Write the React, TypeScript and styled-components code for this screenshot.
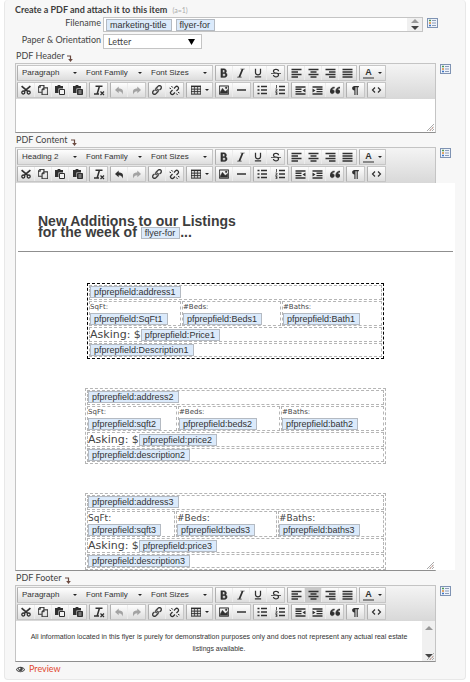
import React from "react";
import styled, { createGlobalStyle, css } from "styled-components";
import {
  ImCopy, ImLink, ImTable2, ImImage,
  ImBold, ImItalic, ImUnderline, ImStrikethrough, ImQuotesLeft, ImPilcrow, ImEye,
} from "react-icons/im";

const Global = createGlobalStyle`
  *, *::before, *::after { box-sizing: border-box; }
  body { margin: 0; background: #fff; color: #444; font: 9px/14px Lato, sans-serif; }
  button, select { font: inherit; color: inherit; margin: 0; }
`;

const ui = `"Liberation Sans", Arial, sans-serif`;

const Panel = styled.main`
  margin: 0 4px;
  padding: 3px 14px 0 10px;
  background: #f7f7f7;
  border: 1px solid #e8e8e8;
  border-top: 0;
  border-radius: 4px;
`;
const Title = styled.h1`
  margin: 0;
  height: 14px;
  font-size: 9px;
  line-height: 14px;
  font-weight: 700;
  color: #3c3c3c;
`;
const Note = styled.small`
  margin-left: 3px;
  font-size: 7px;
  font-weight: 400;
  color: #aaa;
`;
const FieldRow = styled.div`
  display: flex;
  height: 15px;
  margin-bottom: 2px;
  padding-right: 13px;
  & + & { margin-bottom: 0; }
`;
const FieldLabel = styled.label`
  width: 86px;
  margin-right: 2px;
  text-align: right;
  line-height: 12px;
  white-space: nowrap;
`;
const TagBox = styled.div`
  flex: 1;
  display: flex;
  background: #fff;
  border: 1px solid #c4c4c4;
`;
const Tags = styled.div`
  flex: 1;
  display: flex;
  align-items: flex-start;
  gap: 4px;
  padding: 1px 2px;
`;
const Chip = styled.span`
  display: inline-block;
  height: 12px;
  padding: 0 4px 0 3px;
  background: #dbeafb;
  border: 1px solid #b4bac2;
  color: #333;
  font: 400 9px/10px ${ui};
  white-space: nowrap;
  vertical-align: middle;
`;
const Scroller = styled.div<{ $tall?: boolean }>`
  width: ${(p) => (p.$tall ? 13 : 15)}px;
  display: flex;
  flex-direction: column;
  justify-content: space-between;
  background: #f0f0f0;
  padding: ${(p) => (p.$tall ? "4px 0 2px" : "0")};
`;
const ScrollButton = styled.button`
  display: flex;
  align-items: center;
  justify-content: center;
  height: 6px;
  padding: 0;
  border: 0;
  background: none;
`;
const ListButton = styled.button`
  display: block;
  flex: none;
  width: 11px;
  height: 10px;
  margin: 1px 0 0 4px;
  padding: 0;
  border: 0;
  background: none;
  svg { display: block; }
`;
const PaperWrap = styled.div`
  display: grid;
  align-items: center;
  width: 99px;
  background: #fff;
  border: 1px solid #c4c4c4;
  svg { grid-area: 1 / 1; justify-self: end; margin-right: 6px; pointer-events: none; }
`;
const PlainSelect = styled.select`
  grid-area: 1 / 1;
  appearance: none;
  width: 100%;
  height: 100%;
  padding: 0 4px;
  border: 0;
  background: none;
`;
const SectionTitle = styled.h2`
  display: flex;
  align-items: center;
  gap: 3px;
  margin: 0 0 0 1px;
  height: 14px;
  font-size: 9px;
  font-weight: 400;
  svg { margin-top: 5px; }
`;
const EditorRow = styled.div`
  display: flex;
`;
const EditorBox = styled.section`
  position: relative;
  flex: 1;
  min-width: 0;
  border: 1px solid #c4c4c4;
  border-bottom-color: #8f8f8f;
`;
const Toolbar = styled.div`
  display: flex;
  flex-direction: column;
  gap: 1px;
  padding: 1px;
  background: linear-gradient(#f4f4f4, #d8d8d8);
`;
const ToolRow = styled.div`
  display: flex;
  gap: 2px;
`;
const Group = styled.div`
  display: flex;
  height: 16px;
  border: 1px solid #c6c6c6;
  border-left-color: #b0b0b0;
  border-radius: 1px;
  background: linear-gradient(#fefefe, #dddddd);
`;
const Tool = styled.button<{ $wide?: boolean; $active?: boolean; $muted?: boolean }>`
  display: flex;
  align-items: center;
  justify-content: center;
  gap: 4px;
  width: ${(p) => (p.$wide ? 25 : 17)}px;
  padding: 0;
  border: 0;
  border-right: 1px solid #ececec;
  background: ${(p) => (p.$active ? "#c9c9c9" : "none")};
  color: ${(p) => (p.$muted ? "#a3a3a3" : "#303030")};
  &:last-child { border-right: 0; }
`;
const Picker = styled.div<{ $first?: boolean }>`
  display: grid;
  align-items: center;
  width: ${(p) => (p.$first ? 64 : 65)}px;
  font: 8px/14px ${ui};
  color: #333;
  svg { grid-area: 1 / 1; justify-self: end; margin-right: 5px; pointer-events: none; }
`;
const Letter = styled.span`
  font: 700 9px/9px ${ui};
  border-bottom: 2px solid #888;
  padding: 0 2px;
`;

const bodyHeights = { header: 33, content: 387, footer: 40 };
const Body = styled.div<{ $kind: keyof typeof bodyHeights }>`
  min-height: ${(p) => bodyHeights[p.$kind]}px;
  background: #fff;
  ${(p) => p.$kind === "content" && css`
    height: 387px;
    margin-right: -20px;
    padding: 33px 2px 0;
    overflow: hidden;
  `}
  ${(p) => p.$kind === "footer" && css`display: flex;`}
`;
const Grip = styled.svg`
  position: absolute;
  right: 1px;
  bottom: 1px;
`;
const Headline = styled.h2`
  margin: 0 20px 12px;
  font: 700 14px/11px ${ui};
  color: #3d3d3d;
`;
const Rule = styled.hr`
  height: 1px;
  margin: 0 0 31px;
  border: 0;
  background: #8f8f8f;
`;
const Listing = styled.table<{ $selected?: boolean }>`
  width: ${(p) => (p.$selected ? 297 : 301)}px;
  margin: 0 auto 29px;
  table-layout: fixed;
  border: 1px dashed ${(p) => (p.$selected ? "#000" : "#b5b5b5")};
  border-spacing: 1px;
  color: #444;
`;
const Cell = styled.td<{ $h: number; $size?: number }>`
  height: ${(p) => p.$h}px;
  padding: 0;
  border: 1px dashed #b5b5b5;
  font: ${(p) => p.$size || 7}px/12px "DejaVu Sans", sans-serif;
  vertical-align: top;
  white-space: nowrap;
`;
const Caption = styled.div<{ $tall?: boolean }>`
  line-height: ${(p) => (p.$tall ? 12 : 11)}px;
`;
const Stack = styled.div`
  display: flex;
  flex-direction: column;
  align-items: flex-start;
`;
const Line = styled.div`
  display: flex;
  align-items: flex-end;
  line-height: 13px;
`;
const Legal = styled.p`
  flex: 1;
  margin: 0;
  padding: 10px 12px 0;
  font: 7px/12px ${ui};
  text-align: center;
  color: #333;
`;
const Preview = styled.a`
  display: flex;
  align-items: center;
  gap: 4px;
  height: 17px;
  margin-left: 1px;
  padding-bottom: 3px;
  color: #e2492f;
  text-decoration: none;
  svg { color: #444; }
`;

const Caret = () => (
  <svg width="4" height="2" viewBox="0 0 4 2"><path d="M0 0h4L2 2z" fill="#222" /></svg>
);
const Triangle = ({ up, color, size = 8 }: { up?: boolean; color: string; size?: number }) => (
  <svg width={size} height={size / 2} viewBox="0 0 8 4"><path d={up ? "M0 4h8L4 0z" : "M0 0h8L4 4z"} fill={color} /></svg>
);
const DownHook = () => (
  <svg width="6" height="7" viewBox="0 0 6 7"><path d="M0 1h3.500v4" fill="none" stroke="#6b4a40" strokeWidth="1.200" /><path d="M1.200 4h4.600L3.500 7z" fill="#6b4a40" /></svg>
);

const FieldList = () => (
  <ListButton type="button" aria-label="Insert field">
    <svg width="11" height="10" viewBox="0 0 11 10">
      <rect x=".5" y=".5" width="10" height="9" fill="#eef3fb" stroke="#7f93b3" />
      <path d="M2 2.500h2" stroke="#4d9a4d" strokeWidth="1.500" />
      <path d="M2 5h2" stroke="#dd8a33" strokeWidth="1.500" />
      <path d="M2 7.500h2" stroke="#3e74c4" strokeWidth="1.500" />
      <path d="M5 2.500h4M5 5h4M5 7.500h4" stroke="#8d9db8" />
    </svg>
  </ListButton>
);

const Strokes = ({ d, w = 1.5 }: { d: string; w?: number }) => (
  <svg width="11" height="10" viewBox="0 0 11 10"><path d={d} fill="none" stroke="currentColor" strokeWidth={w} /></svg>
);
const alignIcons: Record<string, string> = {
  "Align left": "M.5 1.500h10M.5 4h6.500M.5 6.500h10M.5 9h6.500",
  "Align center": "M.5 1.500h10M2.500 4h6M.5 6.500h10M2.500 9h6",
  "Align right": "M.5 1.500h10M4 4h6.500M.5 6.500h10M4 9h6.500",
  Justify: "M.5 1.500h10M.5 4h10M.5 6.500h10M.5 9h10",
};
const Cut = () => (
  <svg width="10" height="10" viewBox="0 0 10 10" fill="none" stroke="currentColor">
    <path d="M.6 1.200L6.500 6.200M9.400 1.200L3.500 6.200" strokeWidth="1.700" />
    <circle cx="2.300" cy="7.500" r="1.500" strokeWidth="1.300" />
    <circle cx="7.700" cy="7.500" r="1.500" strokeWidth="1.300" />
  </svg>
);
const Paste = ({ text }: { text?: boolean }) => (
  <svg width="10" height="10" viewBox="0 0 10 10">
    <path d="M0 1h2.200L3 0h2l.8 1H8v2.500H3.500V8H0z" fill="currentColor" />
    <path d="M4.500 4.500h5v5h-5z" fill={text ? "currentColor" : "#f2f2f2"} stroke="currentColor" />
    {text && <path d="M5.500 6h3M5.500 8h3" stroke="#e8e8e8" strokeWidth=".8" />}
  </svg>
);
const Turn = ({ redo }: { redo?: boolean }) => (
  <svg width="9" height="9" viewBox="0 0 9 9">
    <path
      d={redo
        ? "M5.300 .5v2C1.500 2.500 0 4.500 1.600 8.500 2 6.200 3 5.200 5.300 5.200v2.100L9 3.900z"
        : "M3.700 .5v2c3.800 0 5.300 2 3.700 6C7 6.200 6 5.200 3.700 5.200v2.100L0 3.900z"}
      fill="currentColor"
    />
  </svg>
);
const ClearFormat = () => (
  <svg width="12" height="11" viewBox="0 0 12 11">
    <path d="M2.500 1.200h7M6.500 1L4.300 8.500M1 9h5" fill="none" stroke="currentColor" strokeWidth="1.500" />
    <path d="M7.500 6.500l3.500 3.500M11 6.500L7.500 10" stroke="currentColor" strokeWidth="1.200" />
  </svg>
);
const Unlink = () => (
  <svg width="11" height="11" viewBox="0 0 11 11" fill="none" stroke="currentColor" strokeWidth="1.300">
    <path d="M5 3.500l1.500-1.600a1.700 1.700 0 0 1 2.500 2.500L7.500 6M6 7.500L4.500 9A1.700 1.700 0 0 1 2 6.600L3.500 5" />
    <path d="M2.500 1l1 1.500M.5 3l1.500.7M8.500 10l-1-1.500M10.500 8L9 7.300" strokeWidth="1" />
  </svg>
);
const Bullets = ({ numbered }: { numbered?: boolean }) => (
  <svg width="10" height="10" viewBox="0 0 10 10" stroke="currentColor">
    <path d="M4 1.500h6M4 5h6M4 8.500h6" strokeWidth="1.400" />
    {numbered ? <path d="M1.500 0v3M.5 4h1.500v1L.5 6.200H2.500M.5 7.500H2v2.200H.5M.8 8.600H2" fill="none" strokeWidth=".8" />
      : <path d="M.5 1.500h2M.5 5h2M.5 8.500h2" strokeWidth="1.600" />}
  </svg>
);
const Indent = ({ out }: { out?: boolean }) => (
  <svg width="11" height="9" viewBox="0 0 11 9">
    <path d={out ? "M.5 1h10M.5 3.300h6M.5 5.600h6M.5 8h10" : "M.5 1h10M4.500 3.300h6M4.500 5.600h6M.5 8h10"} stroke="currentColor" strokeWidth="1.400" />
    <path d={out ? "M10.500 2.500v4L7.500 4.500z" : "M.5 2.500v4l3-2z"} fill="currentColor" />
  </svg>
);
const Code = () => <Strokes w={1.2} d="M4 2.500L1.500 5 4 7.500M7 2.500L9.500 5 7 7.500" />;

type ToolDef = { label: string; icon: React.ReactNode; wide?: boolean; muted?: boolean };
const topTools: ToolDef[][] = [
  [
    { label: "Bold", icon: <ImBold size={10} strokeWidth={0.6} /> },
    { label: "Italic", icon: <ImItalic size={10} /> },
    { label: "Underline", icon: <ImUnderline size={10} /> },
    { label: "Strikethrough", icon: <ImStrikethrough size={10} /> },
  ],
  Object.keys(alignIcons).map((label) => ({ label, icon: <Strokes d={alignIcons[label]} /> })),
  [{ label: "Text color", wide: true, icon: <><Letter>A</Letter><Caret /></> }],
];
const bottomTools = (canUndo?: boolean): ToolDef[][] => [
  [
    { label: "Cut", icon: <Cut /> },
    { label: "Copy", icon: <ImCopy size={10} strokeWidth={0.6} /> },
    { label: "Paste", icon: <Paste /> },
    { label: "Paste as text", icon: <Paste text /> },
  ],
  [{ label: "Clear formatting", icon: <ClearFormat /> }],
  [
    { label: "Undo", icon: <Turn />, muted: !canUndo },
    { label: "Redo", icon: <Turn redo />, muted: true },
  ],
  [
    { label: "Insert link", icon: <ImLink size={10} strokeWidth={0.6} /> },
    { label: "Remove link", icon: <Unlink /> },
  ],
  [{ label: "Table", wide: true, icon: <><ImTable2 size={10} strokeWidth={0.4} /><Caret /></> }],
  [
    { label: "Insert image", icon: <ImImage size={10} strokeWidth={0.6} /> },
    { label: "Horizontal line", icon: <Strokes d="M1 5h9" /> },
  ],
  [
    { label: "Bullet list", icon: <Bullets /> },
    { label: "Numbered list", icon: <Bullets numbered /> },
  ],
  [
    { label: "Decrease indent", icon: <Indent out /> },
    { label: "Increase indent", icon: <Indent /> },
    { label: "Blockquote", icon: <ImQuotesLeft size={10} strokeWidth={0.6} /> },
  ],
  [{ label: "Show blocks", icon: <ImPilcrow size={9} /> }],
  [{ label: "Source code", icon: <Code /> }],
];

const ToolGroups = ({ groups, active }: { groups: ToolDef[][]; active?: string }) => (
  <>
    {groups.map((tools) => (
      <Group key={tools[0].label}>
        {tools.map((t) => (
          <Tool key={t.label} type="button" aria-label={t.label} $wide={t.wide} $muted={t.muted} $active={t.label === active}>
            {t.icon}
          </Tool>
        ))}
      </Group>
    ))}
  </>
);

type EditorProps = {
  title: string;
  format: string;
  kind: keyof typeof bodyHeights;
  canUndo?: boolean;
  active?: string;
  children?: React.ReactNode;
};
const Editor = ({ title, format, kind, canUndo, active, children }: EditorProps) => (
  <>
    <SectionTitle>{title}<DownHook /></SectionTitle>
    <EditorRow>
      <EditorBox aria-label={title}>
        <Toolbar role="toolbar">
          <ToolRow>
            <Group>
              {[format, "Font Family", "Font Sizes"].map((name, i) => (
                <Picker key={name} $first={i === 0}>
                  <PlainSelect aria-label={i === 0 ? "Block format" : name}><option>{name}</option></PlainSelect>
                  <Caret />
                </Picker>
              ))}
            </Group>
            <ToolGroups groups={topTools} active={active} />
          </ToolRow>
          <ToolRow><ToolGroups groups={bottomTools(canUndo)} /></ToolRow>
        </Toolbar>
        <Body $kind={kind}>{children}</Body>
        <Grip width="7" height="7" viewBox="0 0 7 7">
          <path d="M0 7L7 0M2.500 7L7 2.500M5 7l2-2" stroke="#a9a9a9" />
          <path d="M3 6h1M5 4h1" stroke="#c98a7a" />
        </Grip>
      </EditorBox>
      <FieldList />
    </EditorRow>
  </>
);

type Home = {
  n: number;
  fields: [string, string, string];
  price: string;
  description: string;
  cols: [number, number];
  size: number;
};
const homes: Home[] = [
  { n: 1, fields: ["SqFt1", "Beds1", "Bath1"], price: "Price1", description: "Description1", cols: [92, 99], size: 7 },
  { n: 2, fields: ["sqft2", "beds2", "bath2"], price: "price2", description: "description2", cols: [90, 102], size: 7 },
  { n: 3, fields: ["sqft3", "beds3", "baths3"], price: "price3", description: "description3", cols: [88, 101], size: 9 },
];
const Col = styled.col<{ $w?: number }>`
  width: ${(p) => (p.$w ? `${p.$w}px` : "auto")};
`;
const Field = ({ name }: { name: string }) => <Chip>pfprepfield:{name}</Chip>;

const HomeTable = ({ home }: { home: Home }) => (
  <Listing $selected={home.n === 1}>
    <colgroup><Col $w={home.cols[0]} /><Col $w={home.cols[1]} /><Col /></colgroup>
    <tbody>
      <tr><Cell $h={15} colSpan={3}><Line><Field name={`address${home.n}`} /></Line></Cell></tr>
      <tr>
        {["SqFt:", "#Beds:", "#Baths:"].map((caption, i) => (
          <Cell key={caption} $h={25} $size={home.size}>
            <Stack><Caption $tall={home.size > 7}>{caption}</Caption><Field name={home.fields[i]} /></Stack>
          </Cell>
        ))}
      </tr>
      <tr><Cell $h={15} $size={11} colSpan={3}><Line>Asking: $<Field name={home.price} /></Line></Cell></tr>
      <tr><Cell $h={14} colSpan={3}><Stack><Field name={home.description} /></Stack></Cell></tr>
    </tbody>
  </Listing>
);

export default function App() {
  return (
    <>
      <Global />
      <Panel>
        <Title>Create a PDF and attach it to this item <Note>(a=1)</Note></Title>
        <FieldRow>
          <FieldLabel as="span" id="filename-label">Filename</FieldLabel>
          <TagBox>
            <Tags role="textbox" tabIndex={0} aria-labelledby="filename-label">
              <Chip>marketing-title</Chip>
              <Chip>flyer-for</Chip>
            </Tags>
            <Scroller>
              <ScrollButton type="button" aria-label="Scroll up"><Triangle up color="#999" /></ScrollButton>
              <ScrollButton type="button" aria-label="Scroll down"><Triangle color="#444" /></ScrollButton>
            </Scroller>
          </TagBox>
          <FieldList />
        </FieldRow>
        <FieldRow>
          <FieldLabel htmlFor="paper">Paper &amp; Orientation</FieldLabel>
          <PaperWrap>
            <PlainSelect id="paper"><option>Letter</option></PlainSelect>
            <svg width="7" height="6" viewBox="0 0 7 6"><path d="M0 0h7L3.500 6z" fill="#000" /></svg>
          </PaperWrap>
        </FieldRow>
        <Editor title="PDF Header" format="Paragraph" kind="header" />
        <Editor title="PDF Content" format="Heading 2" kind="content" canUndo>
          <Headline>New Additions to our Listings<br />for the week of <Chip>flyer-for</Chip>...</Headline>
          <Rule />
          {homes.map((home) => <HomeTable key={home.n} home={home} />)}
        </Editor>
        <Editor title="PDF Footer" format="Paragraph" kind="footer" active="Align center">
          <Legal>
            All information located in this flyer is purely for demonstration purposes only and does not represent any actual real estate listings available.
          </Legal>
          <Scroller $tall>
            <ScrollButton type="button" aria-label="Scroll up"><Triangle up color="#999" /></ScrollButton>
            <ScrollButton type="button" aria-label="Scroll down"><Triangle color="#444" /></ScrollButton>
          </Scroller>
        </Editor>
        <Preview href="#preview"><ImEye size={9} />Preview</Preview>
      </Panel>
    </>
  );
}
